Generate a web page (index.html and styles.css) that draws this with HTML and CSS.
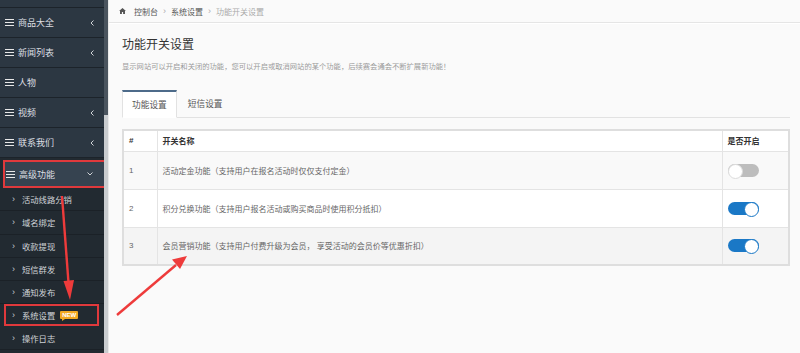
FILE: index.html
```html
<!DOCTYPE html>
<html lang="zh-CN">
  <head>
    <meta charset="UTF-8" />
    <meta name="viewport" content="width=device-width, initial-scale=1.0" />
    <title>功能开关设置</title>

    <link rel="stylesheet" href="styles.css">
  </head>
  <body>
    <div class="wrapper">
      <aside class="sidebar">
        <div class="menu-stub"></div>
        <ul class="menu">
          <li class="menu-item">
            <svg class="bars" viewBox="0 0 9 7"><path d="M0 .5h9M0 3.5h9M0 6.5h9" /></svg>
            <span>商品大全</span>
            <svg class="caret" viewBox="0 0 4 6"><path d="M3.5 .5 1 3l2.5 2.5" /></svg>
          </li>
          <li class="menu-item">
            <svg class="bars" viewBox="0 0 9 7"><path d="M0 .5h9M0 3.5h9M0 6.5h9" /></svg>
            <span>新闻列表</span>
            <svg class="caret" viewBox="0 0 4 6"><path d="M3.5 .5 1 3l2.5 2.5" /></svg>
          </li>
          <li class="menu-item">
            <svg class="bars" viewBox="0 0 9 7"><path d="M0 .5h9M0 3.5h9M0 6.5h9" /></svg>
            <span>人物</span>
          </li>
          <li class="menu-item">
            <svg class="bars" viewBox="0 0 9 7"><path d="M0 .5h9M0 3.5h9M0 6.5h9" /></svg>
            <span>视频</span>
            <svg class="caret" viewBox="0 0 4 6"><path d="M3.5 .5 1 3l2.5 2.5" /></svg>
          </li>
          <li class="menu-item">
            <svg class="bars" viewBox="0 0 9 7"><path d="M0 .5h9M0 3.5h9M0 6.5h9" /></svg>
            <span>联系我们</span>
            <svg class="caret" viewBox="0 0 4 6"><path d="M3.5 .5 1 3l2.5 2.5" /></svg>
          </li>
          <li class="menu-item active">
            <svg class="bars" viewBox="0 0 9 7"><path d="M0 .5h9M0 3.5h9M0 6.5h9" /></svg>
            <span>高级功能</span>
            <svg class="caret-down" viewBox="0 0 6 4"><path d="M.5 .5 3 3 5.5 .5" /></svg>
          </li>
        </ul>
        <ul class="submenu">
          <li>活动线路分销</li>
          <li>域名绑定</li>
          <li>收款提现</li>
          <li>短信群发</li>
          <li>通知发布</li>
          <li class="marked">系统设置 <em class="badge">NEW</em></li>
          <li>操作日志</li>
        </ul>
      </aside>
      <div class="scroll"><div class="thumb"></div></div>

      <main class="content">
        <div class="crumbs">
          <svg class="home" viewBox="0 0 8 7"><path d="M4 0 0 3.6h1.1V7h2.2V4.8h1.4V7h2.2V3.6H8z" /></svg>
          <a>控制台</a>
          <span class="sep">›</span>
          <a>系统设置</a>
          <span class="sep">›</span>
          <span class="current">功能开关设置</span>
        </div>

        <div class="page">
          <h1>功能开关设置</h1>
          <p class="desc">显示网站可以开启和关闭的功能，您可以开启或取消网站的某个功能，后续赛会通会不断扩展新功能！</p>

          <div class="tabs">
            <span class="tab active">功能设置</span>
            <span class="tab">短信设置</span>
          </div>

          <table class="switches">
            <thead>
              <tr>
                <th class="num">#</th>
                <th>开关名称</th>
                <th class="state">是否开启</th>
              </tr>
            </thead>
            <tbody>
              <tr>
                <td class="num">1</td>
                <td>活动定金功能（支持用户在报名活动时仅仅支付定金）</td>
                <td class="state"><span class="switch"></span></td>
              </tr>
              <tr>
                <td class="num">2</td>
                <td>积分兑换功能（支持用户报名活动或购买商品时使用积分抵扣）</td>
                <td class="state"><span class="switch on"></span></td>
              </tr>
              <tr>
                <td class="num">3</td>
                <td>会员营销功能（支持用户付费升级为会员， 享受活动的会员价等优惠折扣）</td>
                <td class="state"><span class="switch on"></span></td>
              </tr>
            </tbody>
          </table>
        </div>
      </main>
    </div>

    <!-- annotation arrows drawn over the screenshot -->
    <svg class="arrows" viewBox="0 0 800 353">
      <path d="M62 196 68.6 284" />
      <polygon points="63.5,281 74,280 70,300" />
      <path d="M117 315 176 265" />
      <polygon points="172,259.5 180,269 187,256" />
    </svg>
  </body>
</html>
```

FILE: styles.css
```css
* {
  margin: 0;
  padding: 0;
  box-sizing: border-box;
}
body {
  background-color: #fafafa;
  font-family: "Liberation Sans", "Noto Sans CJK SC", sans-serif;
  overflow: hidden;
}

.wrapper {
  display: flex;
  height: 353px;
}

/* sidebar */
.sidebar {
  width: 104px;
  background-color: #222a31;
  color: #dcdfe2;
}

.menu-stub {
  height: 8px;
  background-color: #2c3742;
  border-bottom: 1px solid #1c232a;
}

.menu,
.submenu {
  list-style: none;
}

.menu-item {
  display: flex;
  align-items: center;
  height: 30px;
  padding: 0 10px 0 5px;
  background-color: #2c3742;
  border-bottom: 1px solid #1c232a;
  font-size: 9px;
}

.menu-item span {
  flex: 1;
  margin-left: 4px;
}

.menu-item .bars {
  width: 9px;
  height: 7px;
  fill: none;
  stroke: #e8e8e8;
  stroke-width: 1.2;
}

.menu-item .caret {
  width: 4px;
  height: 6px;
  fill: none;
  stroke: #cfd3d7;
  stroke-width: 1;
}

.menu-item.active {
  background-color: #364350;
  border: 2px solid #e0393c;
  margin: 2px -3px 0 3px;
  height: 28px;
  padding-left: 1px;
  padding-right: 12px;
}

.menu-item .caret-down {
  width: 6px;
  height: 4px;
  fill: none;
  stroke: #cfd3d7;
  stroke-width: 1;
}

.submenu li {
  display: flex;
  align-items: center;
  gap: 5px;
  height: 23.3px;
  padding-left: 12px;
  border-bottom: 1px solid #1b2127;
  font-size: 8.3px;
  color: #cfd3d7;
}

.submenu li::before {
  content: "›";
  font-size: 9px;
  color: #c8ccd0;
  width: 5px;
}

.submenu li.marked {
  border: 2px solid #e0393c;
  margin: 0 5px 0 4px;
  padding-left: 6px;
  height: 22px;
}

.badge {
  position: relative;
  font-style: normal;
  font-size: 6px;
  font-weight: bold;
  color: #fff;
  background-color: #f2a922;
  padding: 0 2px;
  line-height: 8px;
  border-radius: 1px;
}

.badge::after {
  content: "";
  position: absolute;
  left: 2px;
  bottom: -2px;
  border-top: 2px solid #f2a922;
  border-right: 3px solid transparent;
}

.scroll {
  width: 4px;
  background-color: #4a545e;
}

.scroll .thumb {
  margin-top: 115px;
  height: 238px;
  background-color: #c9cccf;
}

/* main */
.content {
  flex: 1;
  background-color: #fafafa;
  border-left: 1px solid #e9e9e9;
}

.crumbs {
  display: flex;
  align-items: center;
  gap: 5px;
  height: 23px;
  padding-left: 10px;
  border-bottom: 1px solid #e5e5e5;
  box-shadow: 0 1px 0 #fff;
  font-size: 8px;
  color: #555;
}

.crumbs .home {
  width: 7px;
  height: 6px;
  fill: #555;
  margin-right: 3px;
}

.crumbs .sep {
  color: #aaa;
  font-size: 9px;
}

.crumbs .current {
  color: #aaa;
}

.page {
  padding: 14px 10px 0 13px;
}

.page h1 {
  font-size: 12px;
  font-weight: normal;
  color: #333;
  line-height: 16px;
}

.desc {
  margin-top: 9px;
  font-size: 7.3px;
  color: #9a9a9a;
  line-height: 10px;
}

.tabs {
  display: flex;
  margin-top: 18px;
  border-bottom: 1px solid #e2e2e2;
  height: 28px;
}

.tab {
  display: flex;
  align-items: center;
  padding: 0 11px;
  font-size: 8.7px;
  color: #555;
  white-space: nowrap;
}

.tab.active {
  padding: 0 9px;
  background-color: #fff;
  border: 1px solid #e2e2e2;
  border-top: 2px solid #4d6b8a;
  border-bottom-color: #fff;
  height: 28px;
}

.switches {
  width: 100%;
  margin-top: 11px;
  border-collapse: collapse;
  border: 2px solid #dedede;
  font-size: 8px;
  color: #666;
}

.switches th,
.switches td {
  border: 1px solid #e4e4e4;
  text-align: left;
  padding: 0 5px;
}

.switches th {
  height: 21px;
  background-color: #fff;
  color: #333;
  font-weight: bold;
}

.switches td {
  height: 38px;
}

.switches .num {
  width: 34px;
}

.switches .state {
  width: 67px;
}

.switches tbody tr:nth-child(1) {
  background-color: #f9f9f9;
}
.switches tbody tr:nth-child(2) {
  background-color: #fff;
}
.switches tbody tr:nth-child(3) {
  background-color: #f4f4f4;
}

.switch {
  display: block;
  position: relative;
  width: 31px;
  height: 13px;
  border-radius: 7px;
  background-color: #bdbdbd;
}

.switch::after {
  content: "";
  position: absolute;
  top: 0;
  left: 0;
  width: 13px;
  height: 13px;
  border-radius: 50%;
  background-color: #fff;
  border: 1px solid #dcdcdc;
}

.switch.on {
  background-color: #1a78c6;
}

.switch.on::after {
  left: auto;
  right: 0;
  border-color: #1a78c6;
}

.arrows {
  position: absolute;
  top: 0;
  left: 0;
  width: 800px;
  height: 353px;
  pointer-events: none;
}

.arrows path {
  fill: none;
  stroke: #ee3b3b;
  stroke-width: 2.4;
}

.arrows polygon {
  fill: #ee3b3b;
}
```
